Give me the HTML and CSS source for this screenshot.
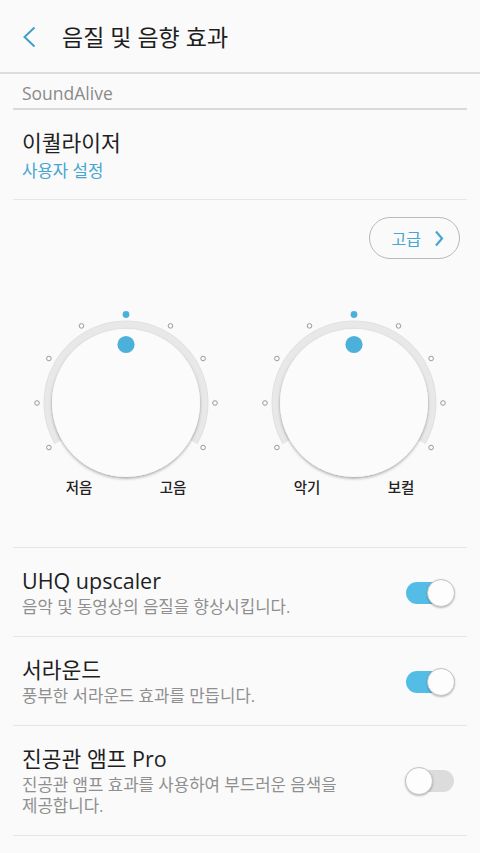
FILE: index.html
```html
<!DOCTYPE html>
<html lang="ko">
<head>
  <meta charset="UTF-8" />
  <meta name="viewport" content="width=device-width, initial-scale=1.0"/>
  <title>음질 및 음향 효과</title>
  <link rel="stylesheet" href="styles.css">
</head>
<body>
  <svg class="defs" width="0" height="0">
    <defs>
      <filter id="knobShadow" x="-20%" y="-20%" width="140%" height="140%">
        <feDropShadow dx="0" dy="1.5" stdDeviation="1.4" flood-color="#000" flood-opacity="0.35"/>
      </filter>
      <symbol id="dialFace" viewBox="0 0 200 200">
        <path d="M32.45 139 A78 78 0 1 1 167.55 139" fill="none" stroke="#e8e8e8" stroke-width="8"/>
        <path d="M28.98 141 A82 82 0 1 1 171.02 141" fill="none" stroke="#dcdcdc" stroke-width="0.8"/>
        <circle cx="100" cy="100" r="74" fill="#fbfbfb" filter="url(#knobShadow)"/>
        <g fill="none" stroke="#9a9a9a" stroke-width="1">
          <circle cx="22.9" cy="144.5" r="2.3"/>
          <circle cx="11" cy="100" r="2.3"/>
          <circle cx="22.9" cy="55.5" r="2.3"/>
          <circle cx="55.5" cy="22.9" r="2.3"/>
          <circle cx="144.5" cy="22.9" r="2.3"/>
          <circle cx="177.1" cy="55.5" r="2.3"/>
          <circle cx="189" cy="100" r="2.3"/>
          <circle cx="177.1" cy="144.5" r="2.3"/>
        </g>
        <circle cx="100" cy="11.5" r="3.4" fill="#4cb1da"/>
        <circle cx="100" cy="41.5" r="8.6" fill="#4cb1da"/>
      </symbol>
    </defs>
  </svg>

  <header class="app-bar">
    <svg class="back-icon" width="14" height="22" viewBox="0 0 14 22">
      <path d="M12.5 1.5 L2.5 11 L12.5 20.5" fill="none" stroke="#3fa0cb" stroke-width="2"/>
    </svg>
    <h1 class="app-title">음질 및 음향 효과</h1>
  </header>

  <main class="page">
    <div class="section-label">SoundAlive</div>

    <div class="list-item item-eq">
      <div class="item-text">
        <div class="item-title">이퀄라이저</div>
        <div class="item-value">사용자 설정</div>
      </div>
    </div>

    <section class="dial-section">
      <div class="dial-actions">
        <button class="pill-btn">고급
          <svg width="10" height="17" viewBox="0 0 10 17">
            <path d="M2 1.5 L8 8.5 L2 15.5" fill="none" stroke="#44a6d1" stroke-width="2.2"/>
          </svg>
        </button>
      </div>
      <div class="dials">
        <svg class="dial" width="200" height="200" viewBox="0 0 200 200">
          <use href="#dialFace"/>
          <text class="dial-label" x="53" y="190">저음</text>
          <text class="dial-label" x="147" y="190">고음</text>
        </svg>
        <svg class="dial" width="200" height="200" viewBox="0 0 200 200">
          <use href="#dialFace"/>
          <text class="dial-label" x="53" y="190">악기</text>
          <text class="dial-label" x="147" y="190">보컬</text>
        </svg>
      </div>
    </section>

    <div class="list-item">
      <div class="item-text">
        <div class="item-title">UHQ upscaler</div>
        <div class="item-sub">음악 및 동영상의 음질을 향상시킵니다.</div>
      </div>
      <div class="switch on"><span class="thumb"></span></div>
    </div>

    <div class="list-item">
      <div class="item-text">
        <div class="item-title">서라운드</div>
        <div class="item-sub">풍부한 서라운드 효과를 만듭니다.</div>
      </div>
      <div class="switch on"><span class="thumb"></span></div>
    </div>

    <div class="list-item">
      <div class="item-text">
        <div class="item-title">진공관 앰프 Pro</div>
        <div class="item-sub">진공관 앰프 효과를 사용하여 부드러운 음색을 제공합니다.</div>
      </div>
      <div class="switch"><span class="thumb"></span></div>
    </div>
  </main>
</body>
</html>
```

FILE: styles.css
```css
* {
  margin: 0;
  padding: 0;
  box-sizing: border-box;
}

html, body {
  width: 100%;
  height: 100%;
  overflow: hidden;
  background-color: #fafafa;
  font-family: 'Open Sans', 'Noto Sans CJK KR', sans-serif;
  color: #1f1f1f;
  word-break: keep-all;
}

.defs {
  position: absolute;
}

.app-bar {
  height: 74px;
  padding: 1px 0 0 22px;
  display: flex;
  align-items: center;
  border-bottom: 2px solid #dcdcdc;
}

.back-icon {
  display: block;
  margin-right: 26px;
}

.app-title {
  font-size: 23px;
  font-weight: 400;
  line-height: 30px;
  color: #1e1e1e;
}

.page {
  padding: 0 13px;
}

.section-label {
  padding: 8px 9px 4px;
  line-height: 22px;
  font-size: 17.5px;
  color: #8a8a8a;
  border-bottom: 2px solid #d9d9d9;
}

.list-item {
  display: flex;
  align-items: center;
  padding: 20px 12px 19px 9px;
  border-bottom: 1px solid #e6e6e6;
}

.item-eq {
  padding-bottom: 18px;
}

.item-text {
  flex: 1;
  padding-right: 50px;
}

.item-title {
  font-size: 21.5px;
  line-height: 26px;
}

.item-value {
  margin-top: 4px;
  font-size: 16.75px;
  line-height: 21px;
  color: #44a6d1;
}

.item-sub {
  margin-top: 2px;
  font-size: 16.75px;
  line-height: 21px;
  color: #8f8f8f;
}

.dial-section {
  padding: 17px 0 44px;
  border-bottom: 1px solid #e6e6e6;
}

.dial-actions {
  display: flex;
  justify-content: flex-end;
  padding-right: 7px;
}

.pill-btn {
  height: 42px;
  padding: 0 15px 0 22px;
  display: flex;
  align-items: center;
  gap: 13px;
  border: 1px solid #b9b9b9;
  border-radius: 21px;
  background: transparent;
  font-family: inherit;
  font-size: 16px;
  color: #44a6d1;
}

.pill-btn svg {
  display: block;
}

.dials {
  margin-top: 44px;
  display: flex;
  justify-content: center;
  gap: 28px;
}

.dial {
  display: block;
  overflow: visible;
}

.dial-label {
  font-family: 'Open Sans', 'Noto Sans CJK KR', sans-serif;
  font-size: 14.5px;
  font-weight: 500;
  fill: #222;
  text-anchor: middle;
}

.switch {
  position: relative;
  width: 50px;
  height: 28px;
  flex-shrink: 0;
}

.switch::before {
  content: "";
  position: absolute;
  top: 3px;
  bottom: 3px;
  left: 1px;
  right: 1px;
  border-radius: 11px;
  background: #dcdcdc;
}

.switch.on::before {
  background: #54bde6;
}

.thumb {
  position: absolute;
  top: 0;
  left: 0;
  width: 28px;
  height: 28px;
  border-radius: 50%;
  background: #fdfdfd;
  border: 1px solid #c4c4c4;
  box-shadow: 0 1px 2px rgba(0, 0, 0, 0.25);
}

.switch.on .thumb {
  left: 22px;
}
```
